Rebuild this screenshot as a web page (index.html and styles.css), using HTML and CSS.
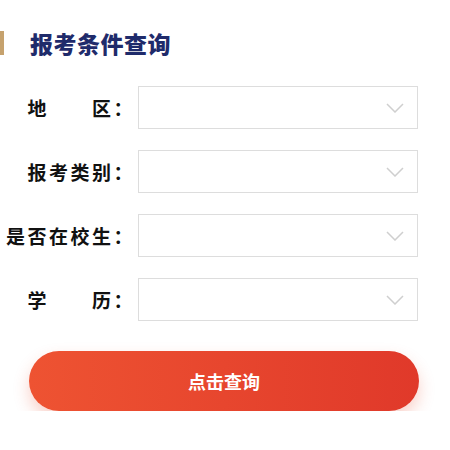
FILE: index.html
```html
<!DOCTYPE html>
<html lang="zh-CN">
<head>
    <meta charset="utf-8">
    <meta name="viewport" content="width=device-width, initial-scale=1.0">
    <title>报考条件查询</title>
    <link rel="stylesheet" href="styles.css">
</head>
<body>
    <div class="query">
        <h2 class="query__title">报考条件查询</h2>
        <form class="query__form">
            <div class="query__row">
                <label class="query__label">地　　区：</label>
                <div class="query__select">
                    <svg class="query__arrow" width="18" height="10" viewBox="0 0 18 10"><path d="M1 1l8 8 8-8" fill="none" stroke="#cfcfcf" stroke-width="1.5"/></svg>
                </div>
            </div>
            <div class="query__row">
                <label class="query__label">报考类别：</label>
                <div class="query__select">
                    <svg class="query__arrow" width="18" height="10" viewBox="0 0 18 10"><path d="M1 1l8 8 8-8" fill="none" stroke="#cfcfcf" stroke-width="1.5"/></svg>
                </div>
            </div>
            <div class="query__row">
                <label class="query__label">是否在校生：</label>
                <div class="query__select">
                    <svg class="query__arrow" width="18" height="10" viewBox="0 0 18 10"><path d="M1 1l8 8 8-8" fill="none" stroke="#cfcfcf" stroke-width="1.5"/></svg>
                </div>
            </div>
            <div class="query__row">
                <label class="query__label">学　　历：</label>
                <div class="query__select">
                    <svg class="query__arrow" width="18" height="10" viewBox="0 0 18 10"><path d="M1 1l8 8 8-8" fill="none" stroke="#cfcfcf" stroke-width="1.5"/></svg>
                </div>
            </div>
            <button class="query__button" type="button">点击查询</button>
        </form>
    </div>
</body>
</html>
```
FILE: styles.css
```css
body {
    margin: 0;
    background: #ffffff;
    font-family: "Noto Sans CJK SC", "Noto Sans", sans-serif;
}

.query {
    width: 450px;
    padding-top: 31px;
}

.query__title {
    margin: 0;
    height: 24px;
    line-height: 24px;
    padding-left: 26px;
    border-left: 4px solid #c6a26e;
    font-size: 23px;
    font-weight: 900;
    letter-spacing: 0.5px;
    color: #1f2b6b;
}

.query__form {
    margin-top: 31px;
}

.query__row {
    display: flex;
    align-items: center;
    margin-bottom: 21px;
}

.query__label {
    width: 135px;
    margin-right: 3px;
    text-align: right;
    font-size: 19px;
    font-weight: bold;
    letter-spacing: 2.5px;
    color: #111111;
    white-space: nowrap;
}

.query__select {
    position: relative;
    width: 280px;
    height: 43px;
    box-sizing: border-box;
    border: 1px solid #dddddd;
    background: #ffffff;
}

.query__arrow {
    position: absolute;
    right: 13px;
    top: 16px;
}

.query__button {
    display: block;
    width: 390px;
    height: 60px;
    margin: 30px 0 0 29px;
    border: none;
    border-radius: 30px;
    background: linear-gradient(to right, #ee5332, #e0392a);
    box-shadow: 0 8px 16px rgba(230, 70, 40, 0.25);
    color: #ffffff;
    font-family: "Noto Sans CJK SC", sans-serif;
    font-size: 18px;
    font-weight: bold;
    cursor: pointer;
}
```
